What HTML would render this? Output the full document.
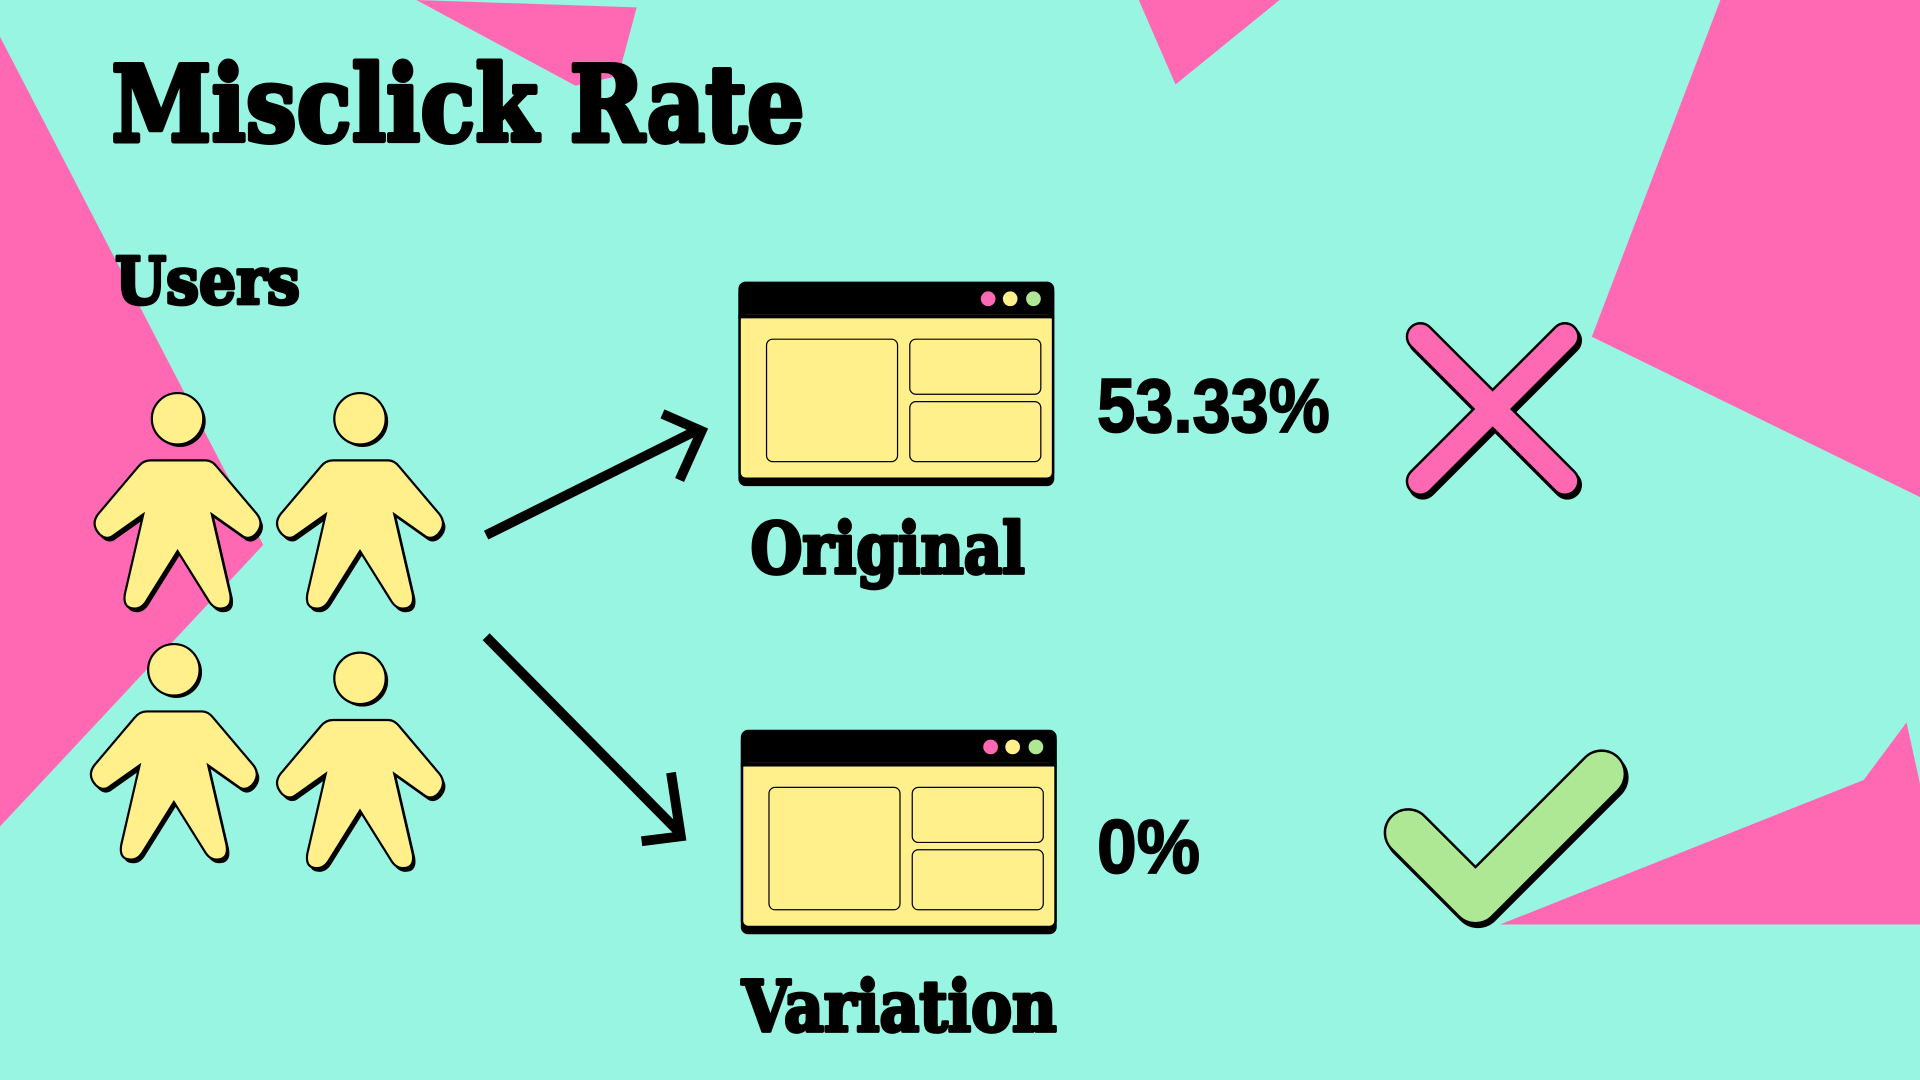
<!DOCTYPE html>
<html><head><meta charset="utf-8"><style>
html,body{margin:0;padding:0;width:1920px;height:1080px;overflow:hidden;background:#98F5E2}
svg{display:block}
.t{font-family:"DejaVu Serif","Liberation Serif",serif;font-weight:bold;stroke:#000;stroke-linejoin:round}
.n{font-family:"Liberation Sans","DejaVu Sans",sans-serif;font-weight:bold;stroke:#000;stroke-width:1.5}
</style></head><body>
<svg width="1920" height="1080" viewBox="0 0 1568 882" xmlns="http://www.w3.org/2000/svg">
<defs>
<path id="fig" d="M123,376 L168,376 Q173,376 177,381 L210,420 Q216,428 209,436 Q203,442 197,437 L173,420 L188,485 Q190,497 180,497 Q174,497 170,490 L145,450 L120,490 Q116,497 110,497 Q100,497 102,485 L117,420 L93,437 Q87,442 81,436 Q74,428 80,420 L113,381 Q117,376 123,376 Z"/>
<g id="person">
<circle cx="147" cy="344" r="21" fill="#000"/>
<use href="#fig" transform="translate(2,3)" fill="#000"/>
<circle cx="145" cy="342" r="21" fill="#FFF08C" stroke="#000" stroke-width="1.8"/>
<use href="#fig" fill="#FFF08C" stroke="#000" stroke-width="1.8"/>
</g>
<g id="win">
<rect x="0" y="3" width="258" height="164" rx="6" fill="#000"/>
<rect x="0" y="0" width="258" height="162" rx="6" fill="#000"/>
<rect x="2" y="27" width="254" height="133" rx="4" fill="#FFF08C"/>
<rect x="0" y="27" width="258" height="3" fill="#000"/>
<circle cx="204" cy="14" r="6" fill="#FF69B4"/>
<circle cx="222" cy="14" r="6" fill="#FFF08C"/>
<circle cx="241" cy="14" r="6" fill="#AEE894"/>
<rect x="23" y="47" width="107" height="100" rx="5" fill="none" stroke="#000" stroke-width="1"/>
<rect x="140" y="47" width="107" height="45" rx="5" fill="none" stroke="#000" stroke-width="1"/>
<rect x="140" y="98" width="107" height="49" rx="5" fill="none" stroke="#000" stroke-width="1"/>
</g>
</defs>
<rect width="1568" height="882" fill="#98F5E2"/>
<g fill="#FF69B4">
<polygon points="340,0 520,6 505,62 470,70"/>
<polygon points="930,0 1045,0 960,69"/>
<polygon points="0,30 215,445 0,675"/>
<polygon points="1405,0 1568,0 1568,406 1300,275"/>
<polygon points="1557,590 1568,640 1568,755 1225,755 1522,637"/>
</g>
<text class="t" x="91" y="115" font-size="86" stroke-width="4" textLength="566" lengthAdjust="spacingAndGlyphs">Misclick Rate</text>
<text class="t" x="94" y="248" font-size="53" stroke-width="3" textLength="151" lengthAdjust="spacingAndGlyphs">Users</text>
<use href="#person"/>
<use href="#person" transform="translate(149,0)"/>
<use href="#person" transform="translate(-3,205)"/>
<use href="#person" transform="translate(149,212)"/>
<g stroke="#000" stroke-width="8" fill="none" stroke-linejoin="miter">
<line x1="397" y1="437" x2="572" y2="350"/>
<polyline points="541,338 573,352 555,392"/>
<line x1="397" y1="520" x2="555" y2="680"/>
<polyline points="548,631 556,683 524,687"/>
</g>
<use href="#win" transform="translate(603,230)"/>
<use href="#win" transform="translate(605,596)"/>
<text class="t" x="613" y="468" font-size="57" stroke-width="3" textLength="224" lengthAdjust="spacingAndGlyphs">Original</text>
<text class="t" x="606" y="842" font-size="57" stroke-width="3" textLength="257" lengthAdjust="spacingAndGlyphs">Variation</text>
<text class="n" x="896" y="353" font-size="62" textLength="190" lengthAdjust="spacingAndGlyphs">53.33%</text>
<text class="n" x="896" y="713" font-size="62" textLength="84" lengthAdjust="spacingAndGlyphs">0%</text>
<g stroke-linecap="round" fill="none">
<g transform="translate(2,3)" stroke="#000" stroke-width="24"><line x1="1160" y1="275" x2="1278" y2="393"/><line x1="1278" y1="275" x2="1160" y2="393"/></g>
<g stroke="#000" stroke-width="24"><line x1="1160" y1="275" x2="1278" y2="393"/><line x1="1278" y1="275" x2="1160" y2="393"/></g>
<g stroke="#FF69B4" stroke-width="20"><line x1="1160" y1="275" x2="1278" y2="393"/><line x1="1278" y1="275" x2="1160" y2="393"/></g>
</g>
<g fill="none" stroke-linecap="round" stroke-linejoin="round">
<polyline transform="translate(2,3)" points="1150,680 1205,735 1308,632" stroke="#000" stroke-width="40"/>
<polyline points="1150,680 1205,735 1308,632" stroke="#000" stroke-width="40"/>
<polyline points="1150,680 1205,735 1308,632" stroke="#AEE894" stroke-width="36"/>
</g>
</svg>
</body></html>
